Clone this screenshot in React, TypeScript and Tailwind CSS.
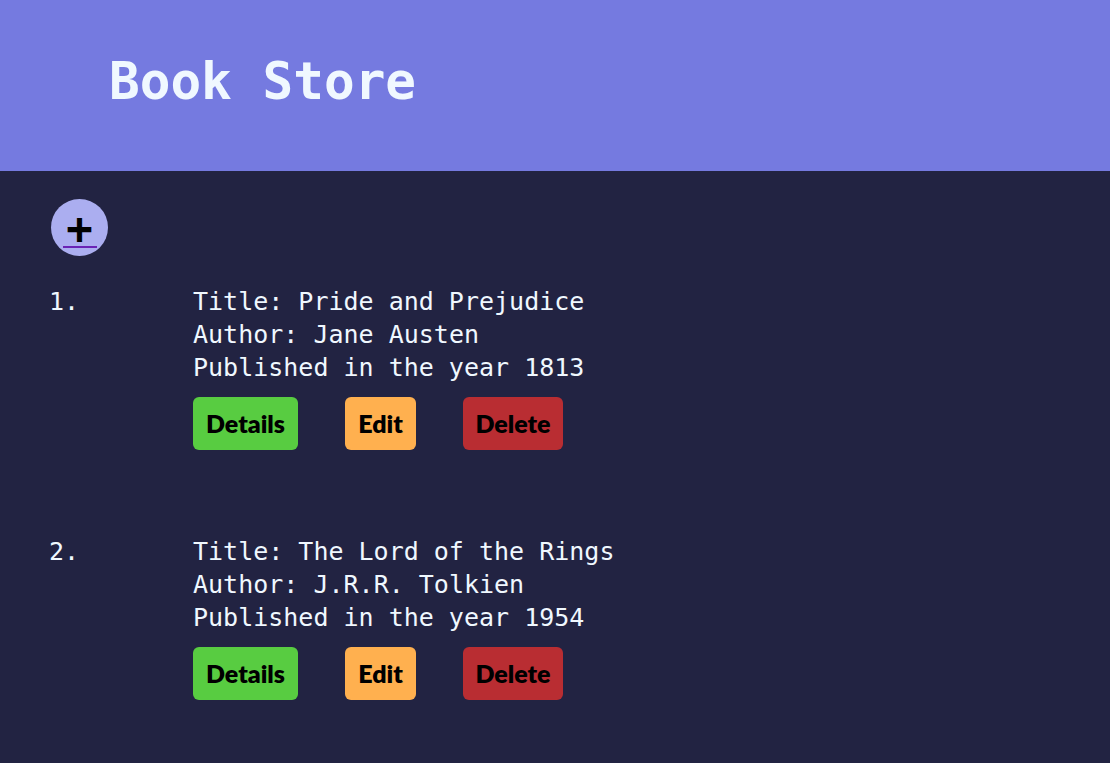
const books = [
  { title: "Pride and Prejudice", author: "Jane Austen", year: 1813 },
  { title: "The Lord of the Rings", author: "J.R.R. Tolkien", year: 1954 },
];

const mono = { fontFamily: '"DejaVu Sans Mono", monospace' };

export default function App() {
  return (
    <div className="min-h-[763px] bg-[#222342]" style={mono}>
      <header className="h-[171px] bg-[#757ae0] flex items-center pl-[109px]">
        <h1 className="text-[51px] font-bold text-[#f0f8ff] pb-[6px]">Book Store</h1>
      </header>
      <main className="pl-[49px] pt-[28px]">
        <a className="ml-[2px] w-[57px] h-[57px] rounded-full bg-[#abaef0] flex flex-col items-center justify-center">
          <span className="text-[44px] font-bold leading-[30px] text-black mt-[6px]">+</span>
          <span className="w-[34px] h-[2px] bg-[#6a23b5] mt-[2px]"></span>
        </a>
        <ol className="mt-[29px] flex flex-col gap-[85px]">
          {books.map((b, i) => (
            <li key={i} className="flex text-[25px] leading-[33px] text-[#f0f8ff]">
              <span className="w-[144px]">{i + 1}.</span>
              <div>
                <p>Title: {b.title}</p>
                <p>Author: {b.author}</p>
                <p>Published in the year {b.year}</p>
                <div className="flex gap-[47px] mt-[13px]" style={{ fontFamily: 'Lato, sans-serif' }}>
                  <button className="w-[105px] h-[53px] rounded-[6px] bg-[#58cc41] text-black font-extrabold text-[25px]">Details</button>
                  <button className="w-[71px] h-[53px] rounded-[6px] bg-[#ffb04f] text-black font-extrabold text-[25px]">Edit</button>
                  <button className="w-[100px] h-[53px] rounded-[6px] bg-[#b92d32] text-black font-extrabold text-[25px]">Delete</button>
                </div>
              </div>
            </li>
          ))}
        </ol>
      </main>
    </div>
  );
}
